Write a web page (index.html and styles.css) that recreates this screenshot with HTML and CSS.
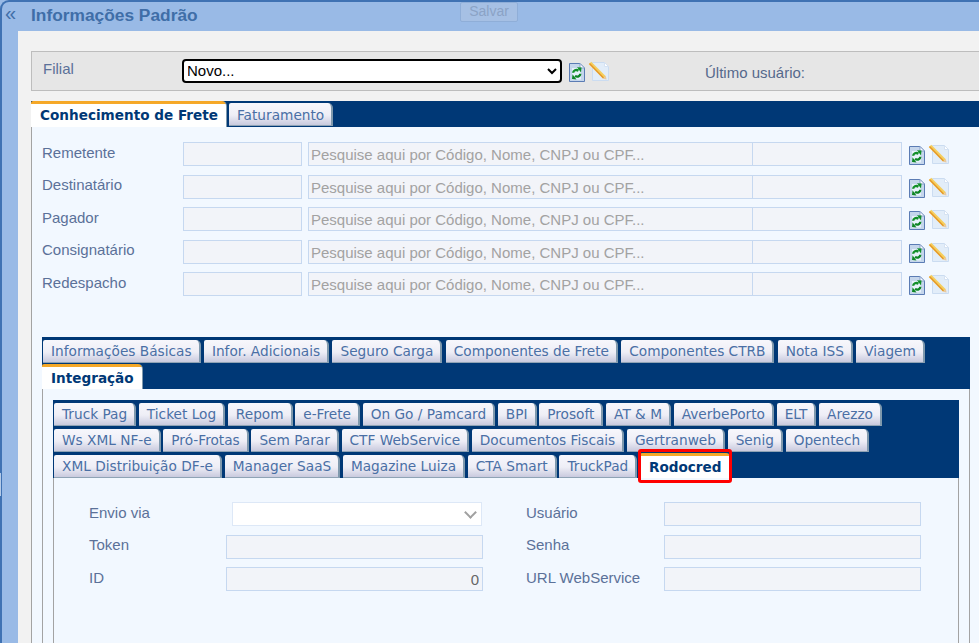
FILE: index.html
```html
<!DOCTYPE html>
<html lang="pt-BR">
<head>
<meta charset="utf-8">
<title>Informações Padrão</title>
<link rel="stylesheet" href="styles.css">
</head>
<body>
<svg class="defs" width="0" height="0" aria-hidden="true">
  <symbol id="i-refresh" viewBox="0 0 16 19">
    <path d="M.5.5h10.500l4.500 4.500v13.500H.5z" fill="#c5d6ec" stroke="#5b7cb4"/>
    <path d="M11 .5V5h4.500z" fill="#fff" stroke="#8aa3cc"/>
    <rect x="3" y="5" width="9" height="11.500" fill="#e6f1fa"/>
    <path d="M4.200 9.800C4.300 7.300 7 6.200 9.500 7.600" fill="none" stroke="#118f28" stroke-width="2.400"/>
    <path d="M8 4.200 12.500 4.500 12 9.400z" fill="#118f28"/>
    <path d="M11.300 10.800C11.200 13.300 8.500 14.400 6 13" fill="none" stroke="#0d8524" stroke-width="2.400"/>
    <path d="M7.500 16.400 3 16.100 3.500 11.200z" fill="#0d8524"/>
  </symbol>
  <symbol id="i-edit" viewBox="0 0 22 20">
    <path d="M4.500 1.500h12l4 4v14h-16z" fill="#e2edf9" stroke="#cbdcf1"/>
    <path d="M16.500 1.500v4h4z" fill="#fff" stroke="#d5e2f3"/>
    <path d="M2 2 16.500 16.500" stroke="#f5cf5e" stroke-width="3.600"/>
    <path d="M1.500 2.500 15.500 17" stroke="#e5962a" stroke-width="1.300"/>
    <path d="M14.800 17.800l3-3 .8 3.800z" fill="#e8c9a0"/>
  </symbol>
</svg>
<div class="shell">
  <header class="topbar">
    <span class="collapse">«</span>
    <h1 class="title">Informações Padrão</h1>
    <button class="save" type="button" disabled>Salvar</button>
  </header>
  <main class="content">
    <section class="filial">
      <label class="filial-label">Filial</label>
      <select class="filial-select"><option>Novo...</option></select>
      <svg class="ico-refresh"><use href="#i-refresh"/></svg>
      <svg class="ico-edit"><use href="#i-edit"/></svg>
      <span class="last-user">Último usuário:</span>
    </section>

    <section class="tabset level-1">
      <nav class="tabs">
        <a class="tab active">Conhecimento de Frete</a>
        <a class="tab">Faturamento</a>
      </nav>
      <div class="panel panel-1">
        <div class="party-list">
          <div class="party"><label>Remetente</label><input class="code" disabled><input class="search" disabled placeholder="Pesquise aqui por Código, Nome, CNPJ ou CPF..."><input class="extra" disabled><svg class="ico-refresh"><use href="#i-refresh"/></svg><svg class="ico-edit"><use href="#i-edit"/></svg></div>
          <div class="party"><label>Destinatário</label><input class="code" disabled><input class="search" disabled placeholder="Pesquise aqui por Código, Nome, CNPJ ou CPF..."><input class="extra" disabled><svg class="ico-refresh"><use href="#i-refresh"/></svg><svg class="ico-edit"><use href="#i-edit"/></svg></div>
          <div class="party"><label>Pagador</label><input class="code" disabled><input class="search" disabled placeholder="Pesquise aqui por Código, Nome, CNPJ ou CPF..."><input class="extra" disabled><svg class="ico-refresh"><use href="#i-refresh"/></svg><svg class="ico-edit"><use href="#i-edit"/></svg></div>
          <div class="party"><label>Consignatário</label><input class="code" disabled><input class="search" disabled placeholder="Pesquise aqui por Código, Nome, CNPJ ou CPF..."><input class="extra" disabled><svg class="ico-refresh"><use href="#i-refresh"/></svg><svg class="ico-edit"><use href="#i-edit"/></svg></div>
          <div class="party"><label>Redespacho</label><input class="code" disabled><input class="search" disabled placeholder="Pesquise aqui por Código, Nome, CNPJ ou CPF..."><input class="extra" disabled><svg class="ico-refresh"><use href="#i-refresh"/></svg><svg class="ico-edit"><use href="#i-edit"/></svg></div>
        </div>

        <section class="tabset level-2">
          <nav class="tabs">
            <a class="tab">Informações Básicas</a>
            <a class="tab">Infor. Adicionais</a>
            <a class="tab">Seguro Carga</a>
            <a class="tab">Componentes de Frete</a>
            <a class="tab">Componentes CTRB</a>
            <a class="tab">Nota ISS</a>
            <a class="tab">Viagem</a>
            <a class="tab active">Integração</a>
          </nav>
          <div class="panel panel-2">
            <section class="tabset level-3">
              <nav class="tabs">
                <a class="tab">Truck Pag</a>
                <a class="tab">Ticket Log</a>
                <a class="tab">Repom</a>
                <a class="tab">e-Frete</a>
                <a class="tab">On Go / Pamcard</a>
                <a class="tab">BPI</a>
                <a class="tab">Prosoft</a>
                <a class="tab">AT &amp; M</a>
                <a class="tab">AverbePorto</a>
                <a class="tab">ELT</a>
                <a class="tab">Arezzo</a>
                <a class="tab">Ws XML NF-e</a>
                <a class="tab">Pró-Frotas</a>
                <a class="tab">Sem Parar</a>
                <a class="tab">CTF WebService</a>
                <a class="tab">Documentos Fiscais</a>
                <a class="tab">Gertranweb</a>
                <a class="tab">Senig</a>
                <a class="tab">Opentech</a>
                <a class="tab">XML Distribuição DF-e</a>
                <a class="tab">Manager SaaS</a>
                <a class="tab">Magazine Luiza</a>
                <a class="tab">CTA Smart</a>
                <a class="tab">TruckPad</a>
                <a class="tab active highlighted">Rodocred</a>
              </nav>
              <div class="panel panel-3">
                <div class="form-grid">
                  <label>Envio via</label>
                  <div class="select-cell"><select class="via" disabled><option></option></select></div>
                  <label>Usuário</label>
                  <input disabled>
                  <label>Token</label>
                  <input disabled>
                  <label>Senha</label>
                  <input disabled>
                  <label>ID</label>
                  <input class="num" disabled value="0">
                  <label>URL WebService</label>
                  <input disabled>
                </div>
              </div>
            </section>
          </div>
        </section>
      </div>
    </section>
  </main>
</div>
</body>
</html>
```
FILE: styles.css
```css
* { box-sizing: border-box; }
html, body { margin: 0; height: 643px; overflow: hidden; }
body { font-family: "Liberation Sans", Arial, sans-serif; font-size: 15px; background: #99bae6; color: #466c9f; }
.defs { position: absolute; }

.shell {
  position: relative;
  height: 643px;
  display: flex;
  flex-direction: column;
  background: #99bae6;
  border-left: 2px solid #3f72b3;
  border-top: 2px solid #3f72b3;
  border-top-left-radius: 9px;
}
.shell::before {
  content: "";
  position: absolute;
  left: -2px; top: 471px;
  width: 1px; height: 23px;
  background: #b5cbe8;
}
.topbar { height: 29px; flex: none; display: flex; align-items: flex-start; }
.collapse { width: 29px; padding-left: 3px; font-size: 20px; line-height: 23px; color: #3f6ea8; }
.title { margin: 3px 0 0; width: 429px; font-size: 17.33px; line-height: 20px; font-weight: 700; color: #3f6ea8; white-space: nowrap; }
.save {
  width: 58px; height: 20px; padding: 0 0 2px;
  font: 14px "Liberation Sans", Arial, sans-serif;
  color: #8ba3c6; background: #a6c0e4;
  border: 1px solid #8faed8; border-radius: 2px;
}

.content {
  flex: 1; min-height: 0;
  margin-left: 16px;
  padding: 20px 0 0 13px;
  background: #f2f2f2;
}

.filial {
  height: 40px;
  display: flex; align-items: flex-start;
  background: #e6e6e6;
  border: 1px solid #bdbdbd; border-right: 0;
}
.filial-label { width: 150px; padding: 7px 0 0 11px; line-height: 20px; color: #5b7199; }
.filial-select {
  width: 380px; height: 24px; margin-top: 7px; padding: 0 0 2px;
  font: 15px "Liberation Sans", Arial, sans-serif; color: #000; background: #fff;
  border: 2px solid #000; border-radius: 4px;
  text-indent: -1px;
}
.filial .ico-refresh { margin: 11px 0 0 7px; }
.filial .ico-edit { margin: 9px 0 0 3px; }
.last-user { margin: 12px 0 0 95px; line-height: 18px; color: #55698c; }

.ico-refresh { width: 16px; height: 19px; flex: none; }
.ico-edit { width: 22px; height: 20px; flex: none; }

.tabs { display: flex; flex-wrap: wrap; background: #003876; }
.tab {
  height: 23px;
  margin: 3px 2.7px 0 0;
  padding: 0 7px 0 8px;
  font: 13.7px/22px "DejaVu Sans", Verdana, sans-serif;
  color: #4a6fa5;
  white-space: nowrap;
  background: linear-gradient(#f7f7fc, #eeeef6 55%, #c9cade);
  border-right: 2px solid #7f99ad;
  border-bottom: 1px solid #8fa3b5;
  border-top-left-radius: 2px;
  border-top-right-radius: 5px;
}
.tab.active {
  height: 25px;
  margin-top: 1px;
  padding: 3px 8px 0 9px;
  font-size: 13.6px;
  font-weight: 700;
  color: #003876;
  background: linear-gradient(#fff, #fff) 0 3px / 100% 100% no-repeat, linear-gradient(#f5a623, #f7c66a);
  border-right: 1px solid #7f99ad;
  border-bottom: 0;
}
.tab.highlighted { position: relative; }
.tab.highlighted::after {
  content: "";
  position: absolute;
  left: -2px; right: -2px; top: -4px; bottom: -5px;
  border: 3px solid #f00;
  border-radius: 3px;
}

.panel { background: #f2f8ff; border-left: 1px solid #a3a3a3; }

.level-1 { margin-top: 10px; }
.level-1 > .tabs { height: 26px; }
.level-1 > .tabs .tab { margin: 2px 2px 0 0; line-height: 24px; }
.level-1 > .tabs .tab.active { margin-top: 0; height: 26px; line-height: 22px; }
.panel-1 { height: 520px; padding: 15px 9px 0 10px; }

.party-list { display: flex; flex-direction: column; gap: 8.5px; }
.party { display: flex; align-items: flex-start; height: 24px; }
.party label { width: 141px; padding-top: .75px; line-height: 20px; color: #5b7199; }
.party input, .form-grid input {
  height: 24px; padding: 1px 3px 0 2px; margin: 0;
  font: 15px "Liberation Sans", Arial, sans-serif;
  color: #666;
  background: #f2f4f9;
  border: 1px solid #c6d8f0;
}
.party input::placeholder { color: #a2a2a2; opacity: 1; }
.party .code { width: 119px; margin-right: 6px; }
.party .search { width: 444px; border-right: 0; }
.party .extra { width: 150px; }
.party .ico-refresh { margin: 4px 0 0 7px; }
.party .ico-edit { margin: 2px 0 0 3px; }

.level-2 { margin-top: 41px; }
.level-2 > .tabs { padding-left: 1px; }
.level-2 > .tabs > .tab { margin-right: 3.3px; }
.level-2 > .tabs .tab.active { margin-left: -1px; }
.panel-2 { padding: 11px 10px 0 10px; height: 260px; border-right: 1px solid #a3a3a3; }

.level-3 > .tabs { padding-left: 1px; }
.panel-3 { height: 170px; padding: 24px 0 0 35px; border-right: 1px solid #a3a3a3; }

.form-grid {
  display: grid;
  grid-template-columns: 137px 257px 43px 138px 257px;
  row-gap: 8.5px;
  align-items: start;
}
.form-grid label { line-height: 20px; padding-top: .75px; color: #5b7199; }
.form-grid label:nth-of-type(even) { grid-column: 4; }
.form-grid input { width: 257px; }
.form-grid .num { text-align: right; }
.select-cell { position: relative; padding-left: 6px; }
.select-cell::after {
  content: "";
  position: absolute;
  right: 8px; top: 6px;
  width: 7px; height: 7px;
  border-right: 2px solid #a0a0a0;
  border-bottom: 2px solid #a0a0a0;
  transform: rotate(45deg);
}
.via {
  appearance: none;
  display: block;
  width: 250px; height: 24px; margin: 0;
  background: #fff;
  border: 1px solid #dde8f7;
  opacity: 1;
}
```
